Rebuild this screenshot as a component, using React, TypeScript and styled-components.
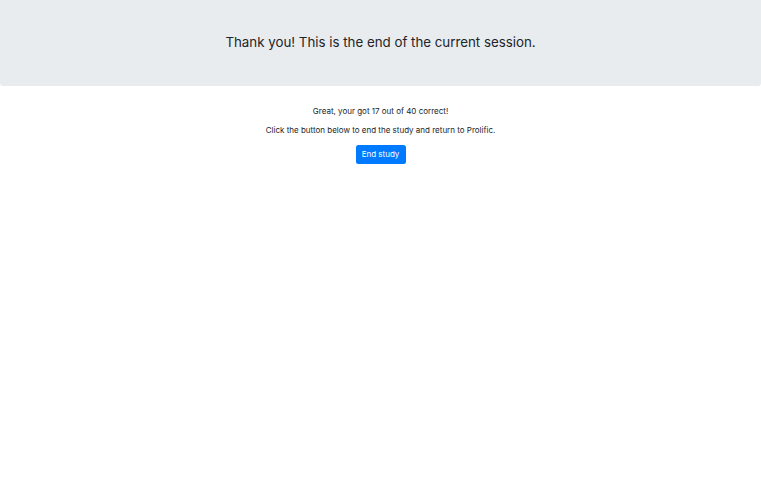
import React from "react";
import styled, { createGlobalStyle } from "styled-components";

const GlobalStyle = createGlobalStyle`
  html, body {
    margin: 0;
    padding: 0;
    background: #ffffff;
    font-family: Inter, "Liberation Sans", sans-serif;
    color: #212529;
  }
`;

const Jumbotron = styled.header`
  height: 86px;
  background: #e9ecef;
  border-radius: 0 0 3px 3px;
  display: flex;
  justify-content: center;
  padding-top: 34px;
  box-sizing: border-box;
`;

const Title = styled.h1`
  margin: 0;
  font-size: 13.3px;
  font-weight: 400;
  line-height: 16px;
`;

const Content = styled.main`
  display: flex;
  flex-direction: column;
  align-items: center;
  padding-top: 20.5px;
`;

const Line = styled.p`
  margin: 0 0 10.4px;
  font-size: 8px;
  line-height: 9.6px;
`;

const Button = styled.button`
  margin-top: -1.5px;
  height: 19px;
  width: 50px;
  padding: 0;
  border: none;
  border-radius: 2.5px;
  background: #007bff;
  color: #ffffff;
  font-family: inherit;
  font-size: 8px;
  cursor: pointer;
`;

const App = () => {
  return (
    <>
      <GlobalStyle />
      <Jumbotron>
        <Title>Thank you! This is the end of the current session.</Title>
      </Jumbotron>
      <Content>
        <Line>Great, your got 17 out of 40 correct!</Line>
        <Line>Click the button below to end the study and return to Prolific.</Line>
        <Button>End study</Button>
      </Content>
    </>
  );
};

export default App;
